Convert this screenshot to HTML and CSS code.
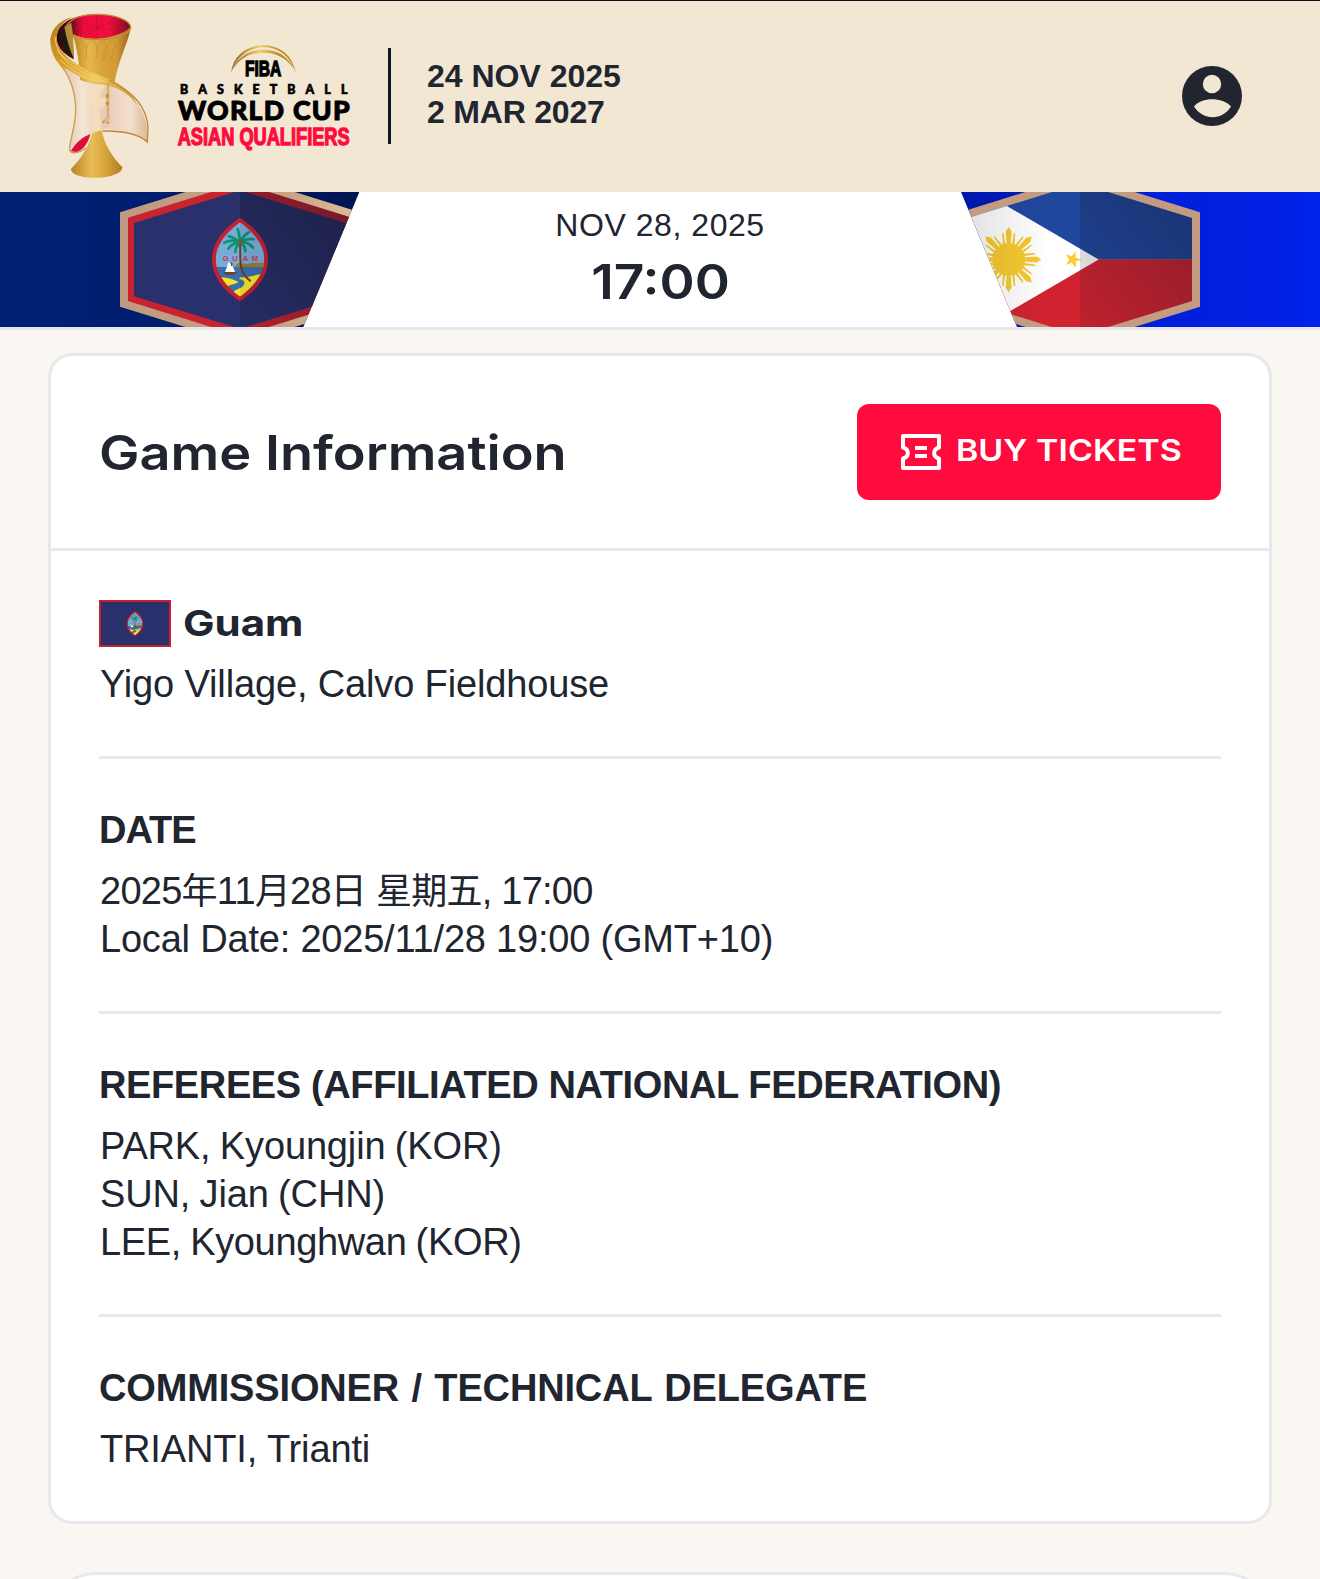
FILE: index.html
```html
<!DOCTYPE html>
<html lang="en">
<head>
<meta charset="utf-8">
<title>Guam v Philippines</title>
<link rel="stylesheet" href="styles.css">
</head>
<body>
<svg class="defs" width="0" height="0" aria-hidden="true">
  <symbol id="guam-seal" viewBox="636 112 168 253">
    <clipPath id="seal-clip"><path d="M720 127C752 150 793 190 793 238C793 286 752 327 720 350C688 327 647 286 647 238C647 190 688 150 720 127Z"/></clipPath>
    <path fill="#c6202e" d="M720 113C757 137 804 180 804 238C804 297 757 340 720 364C683 340 636 297 636 238C636 180 683 137 720 113Z"/>
    <g clip-path="url(#seal-clip)">
      <path fill="#78abd8" d="M640 110H800V262H640Z"/>
      <path fill="#3a6fae" d="M640 261H800V370H640Z"/>
      <path fill="#a17a2c" d="M705 259L716 248L740 252L760 248H800V261H705Z"/>
      <path fill="#f8e426" d="M640 293C668 290 688 293 716 306C704 314 690 312 684 320L660 325ZM720 292C742 294 755 286 800 280V370H690C704 350 690 334 716 326C740 316 738 300 718 297Z"/>
      <path fill="none" stroke="#6b4024" stroke-width="6" d="M720 187C722 216 718 246 725 267C730 285 738 292 752 304"/>
      <g fill="none" stroke="#0d936f" stroke-width="8" stroke-linecap="round">
        <path d="M720 187C718 172 718 160 713 147M720 187C727 174 733 163 747 157M720 187C734 179 746 174 761 178M720 187C735 185 748 190 759 203M720 187C730 193 736 204 736 214M720 187C711 196 706 204 706 216M720 187C704 189 692 194 685 206M720 187C704 180 687 181 673 188M720 187C708 177 700 170 686 169"/>
      </g>
      <circle cx="721" cy="187" r="6" fill="#9e4a2c"/>
      <path fill="#fff" d="M685 246Q700 258 705 276H675Q682 262 685 246Z"/>
      <path fill="#70402a" d="M669 276H712L704 284H678ZM693 247H697V258H693Z"/>
      <text class="seal-name" x="668 697 728 755" y="243">GUAM</text>
    </g>
  </symbol>
</svg>

<header class="site-header">
  <svg class="event-logo" viewBox="0 3 1020 573" role="img" aria-label="FIBA Basketball World Cup Asian Qualifiers">
    <defs>
      <linearGradient id="gold" x1="0" x2="1"><stop offset="0" stop-color="#bd8325"/><stop offset=".28" stop-color="#e7b74c"/><stop offset=".5" stop-color="#d9a338"/><stop offset=".75" stop-color="#d29b36"/><stop offset="1" stop-color="#9b6318"/></linearGradient>
      <linearGradient id="base" x1="0" x2="1"><stop offset="0" stop-color="#b98126"/><stop offset=".4" stop-color="#e9bd55"/><stop offset=".65" stop-color="#d9a53d"/><stop offset="1" stop-color="#b57c26"/></linearGradient>
      <linearGradient id="band" x1="0" x2="1" y2="1"><stop offset="0" stop-color="#b57b1b"/><stop offset=".35" stop-color="#d69d25"/><stop offset=".6" stop-color="#efc659"/><stop offset="1" stop-color="#c98d24"/></linearGradient>
      <linearGradient id="veil" x1="0" x2="1"><stop offset="0" stop-color="#e3bda1"/><stop offset=".25" stop-color="#f4e5d5"/><stop offset=".5" stop-color="#e8cbb5"/><stop offset=".8" stop-color="#f2dfcf"/><stop offset="1" stop-color="#dfb795"/></linearGradient>
      <linearGradient id="bowl" x1="0" x2="1"><stop offset="0" stop-color="#24070c"/><stop offset=".2" stop-color="#6a0920"/><stop offset=".36" stop-color="#ef0c3c"/><stop offset=".7" stop-color="#f20f3f"/><stop offset="1" stop-color="#780a24"/></linearGradient>
      <linearGradient id="arc" x1="0" x2="1"><stop offset="0" stop-color="#8f6418"/><stop offset=".45" stop-color="#f1cd70"/><stop offset=".75" stop-color="#bd8727"/><stop offset="1" stop-color="#c08a2b"/></linearGradient>
    </defs>
    <path fill="url(#base)" d="M190 385H214C220 430 250 477 277 501C277 542 123 544 123 507C150 480 180 440 190 385Z"/>
    <path fill="url(#veil)" d="M92 190C124 240 135 270 136 325C137 380 122 410 118 452C160 405 190 399 222 388C265 386 315 400 352 426C360 365 329 281 237 241Z"/>
    <path fill="#df0b39" d="M122 454C138 426 160 410 181 402C175 428 160 450 140 456Z"/>
    <path fill="none" stroke="#c99c55" stroke-width="4" d="M96 200C128 244 138 285 137 334C135 387 118 423 119 449C121 463 147 461 168 443"/>
    <path fill="#f6dfbd" opacity=".8" d="M153 255H226C219 272 211 278 209 292C236 291 235 323 207 324L214 393H187L191 324C160 323 161 293 190 292C188 275 165 275 153 255Z"/>
    <path fill="url(#bowl)" d="M80 116C79 65 138 43 201 43C258 43 302 62 302 84C299 104 260 118 215 118C180 118 150 112 128 104L131 178C98 160 82 141 80 116Z"/>
    <g fill="none" stroke="#c80a33" stroke-width="2.5" opacity=".65"><path d="M138 64L290 103M145 103L270 55M200 44V118M163 52L205 84L240 47M178 46L205 72L222 45M159 112L205 84L251 115M225 79L255 51M237 80L272 57M250 82L286 63"/></g>
    <path fill="url(#gold)" d="M128 104C175 125 263 119 302 80C300 115 267 175 254 246C228 261 164 246 151 240C148 198 142 145 128 104Z"/>
    <g fill="none" stroke="#b5822f" stroke-width="2.500" opacity=".5"><path d="M141 144C144 124 151 122 155 125C169 136 172 152 168 176M168 150C171 124 182 121 190 123C204 137 206 154 196 184M199 153C202 129 212 124 220 123C233 137 230 157 219 182M229 148C233 127 244 121 251 119C259 133 254 152 243 178M258 142C262 124 272 117 278 113C283 126 274 144 264 162"/></g>
    <path fill="none" stroke="#c58c32" stroke-width="4" d="M110 77C126 51 163 43 201 43C258 43 302 62 302 82C294 120 176 130 128 104"/>
    <path fill="#171b10" d="M103 80L106 89L131 178L106 154L91 110Z"/>
    <path fill="#b28c37" d="M103 80L124 68L129 106L132 178Q112 132 103 80Z"/>
    <path fill="url(#band)" d="M128 50C90 59 60 89 61 125C63 166 84 188 95 202C139 216 163 253 222 253C272 265 302 287 322 315C300 270 261 246 224 232C177 211 128 192 100 159C65 119 78 75 128 50Z"/>
    <path fill="none" stroke="#f1d17a" stroke-width="3" d="M75 111C80 163 109 192 156 215C184 231 205 235 226 246M82 152C105 182 150 198 205 235M90 180C130 212 167 242 220 245"/>
    <path fill="none" stroke="#bc8a3a" stroke-width="4" d="M237 241C300 270 350 314 354 382L352 426C322 398 270 392 218 393"/>
    <g fill="#cf972c" stroke="#c89435" stroke-width="2"><path d="M232 250V352M236 250V363" fill="none"/><circle cx="232" cy="288" r="5"/><circle cx="232" cy="310" r="5"/><circle cx="220" cy="366" r="3"/><circle cx="234" cy="368" r="3"/><path d="M232 350L220 366M228 355L228 371" fill="none"/></g>
    <path fill="url(#arc)" d="M603 218C611 160 657 135 701 136C746 136 788 164 797 218C778 164 744 142 701 142C659 142 623 164 603 218ZM609 207C628 166 660 149 701 149C742 149 774 168 791 206C767 171 736 158 701 158C663 158 633 172 609 207Z"/>
    <text class="logo-fiba" x="645" y="229" textLength="109" lengthAdjust="spacingAndGlyphs">FIBA</text>
    <text class="logo-sport" x="450" y="282" textLength="502">BASKETBALL</text>
    <text class="logo-cup" x="444" y="360" textLength="515">WORLD CUP</text>
    <text class="logo-stage" x="443" y="436" textLength="516" lengthAdjust="spacingAndGlyphs">ASIAN QUALIFIERS</text>
  </svg>
  <div class="event-dates"><span>24 NOV 2025</span><span class="date-end">2 MAR 2027</span></div>
  <svg class="account" viewBox="0 0 60 60" role="img" aria-label="Account">
    <circle cx="30" cy="30" r="30" fill="#20252f"/>
    <circle cx="30" cy="18" r="9.2" fill="#f2e7d3"/>
    <path fill="#f2e7d3" d="M12 40.500C20 30.800 40 30.800 49 40.500C40 55 21 54.500 12 40.500Z"/>
  </svg>
</header>

<section class="scoreboard">
  <svg class="team" viewBox="0 36 1080 405" role="img" aria-label="Guam">
    <defs>
      <linearGradient id="navy" x1="0" x2="1"><stop offset="0" stop-color="#002176"/><stop offset=".45" stop-color="#001e6e"/><stop offset="1" stop-color="#001454"/></linearGradient>
      <linearGradient id="shade-r" x1="0" x2="1" y1="1" y2="0"><stop offset="0" stop-color="#101020" stop-opacity=".1"/><stop offset="1" stop-color="#101020" stop-opacity=".5"/></linearGradient>
      <linearGradient id="tan" x1="0" x2="1"><stop offset="0" stop-color="#c09a80"/><stop offset=".65" stop-color="#c5a081"/><stop offset="1" stop-color="#ddbc9c"/></linearGradient>
      <clipPath id="slant-l"><path d="M0 36H1078L910 441H0Z"/></clipPath>
    </defs>
    <g clip-path="url(#slant-l)">
      <path fill="url(#navy)" d="M0 36H1080V441H0Z"/>
      <path fill="url(#tan)" d="M360 97L720 -15L1080 97V380L720 492L360 380Z"/>
      <path fill="#c9232f" d="M384 113L720 9L1056 113V363L720 468L384 363Z"/>
      <path fill="#29306c" d="M402 129L720 31L1038 129V349L720 446L402 349Z"/>
      <path fill="url(#shade-r)" d="M720 9L1056 113V363L720 468Z"/>
      <use href="#guam-seal" x="636" y="112" width="168" height="253"/>
      <path fill="#101020" opacity=".08" d="M720 113C757 137 804 180 804 238C804 297 757 340 720 364Z"/>
    </g>
  </svg>
  <div class="kickoff"><span class="kickoff-date">NOV 28, 2025</span><span class="kickoff-time">17:00</span></div>
  <svg class="team" viewBox="120 36 1080 405" role="img" aria-label="Philippines">
    <defs>
      <linearGradient id="royal" x1="0" x2="1"><stop offset="0" stop-color="#0017a8"/><stop offset=".5" stop-color="#001fd8"/><stop offset="1" stop-color="#0022ea"/></linearGradient>
      <linearGradient id="dim" x1="0" x2="1" y1="1" y2="0"><stop offset="0" stop-color="#101020" stop-opacity=".08"/><stop offset="1" stop-color="#101020" stop-opacity=".36"/></linearGradient>
      <linearGradient id="soft" x1="0" x2="1"><stop offset="0" stop-color="#202020" stop-opacity=".14"/><stop offset=".75" stop-color="#202020" stop-opacity="0"/></linearGradient>
      <clipPath id="slant-r"><path d="M123 36H1200V441H291Z"/></clipPath>
      <clipPath id="hex-r"><path d="M144 114L480 10L816 114V363L480 467L144 363Z"/></clipPath>
      <g id="ray"><path d="M-6 -45L-9 -84L0 -98L9 -84L6 -45ZM-17 -42L-20 -80L-15 -78L-10 -45ZM17 -42L20 -80L15 -78L10 -45Z"/></g>
    </defs>
    <g clip-path="url(#slant-r)">
      <path fill="url(#royal)" d="M120 36H1200V441H120Z"/>
      <path fill="#c29b80" d="M120 97L480 -15L840 97V380L480 492L120 380Z"/>
      <g clip-path="url(#hex-r)">
        <path fill="#20479e" d="M120 0H840V238.500H120Z"/>
        <path fill="#d0232f" d="M120 238.500H840V480H120Z"/>
        <path fill="#fff" d="M536 238.500L120 -4V481Z"/>
        <g fill="#f6ca2e" transform="translate(266 238.500)"><circle r="49"/>
          <use href="#ray"/><use href="#ray" transform="rotate(45)"/><use href="#ray" transform="rotate(90)"/><use href="#ray" transform="rotate(135)"/><use href="#ray" transform="rotate(180)"/><use href="#ray" transform="rotate(225)"/><use href="#ray" transform="rotate(270)"/><use href="#ray" transform="rotate(315)"/>
        </g>
        <path fill="#fccb32" d="M486 239L467 244L468 263L455 248L437 255L448 239L437 223L455 229L467 214L467 233Z"/>
        <path fill="url(#soft)" d="M120 0H480V480H120Z"/>
        <path fill="url(#dim)" d="M480 0H840V480H480Z"/>
      </g>
    </g>
  </svg>
</section>

<main>
  <article class="card">
    <div class="card-head">
      <h1>Game Information</h1>
      <a class="buy">
        <svg viewBox="0 0 40 36" aria-hidden="true"><path d="M2 2H38V13.500C31.500 15.500 31.500 22.500 38 24.500V34H2V24.500C8.500 22.500 8.500 15.500 2 13.500Z" fill="none" stroke="#fff" stroke-width="4" stroke-linejoin="round"/><path d="M14 14H26M14 22H26" stroke="#fff" stroke-width="4"/></svg>
        <span>BUY TICKETS</span>
      </a>
    </div>
    <div class="card-body">
      <section>
        <div class="venue">
          <svg class="flag" viewBox="0 0 72 47" role="img" aria-label="Flag of Guam"><path fill="#c6202e" d="M0 0H72V47H0Z"/><path fill="#29306c" d="M2 2H70V45H2Z"/><use href="#guam-seal" x="27.500" y="11" width="17" height="25.500"/></svg>
          <h2>Guam</h2>
        </div>
        <p class="t-venue">Yigo Village, Calvo Fieldhouse</p>
      </section>
      <section>
        <h3 class="h-date">DATE</h3>
        <p class="t-when">2025<span class="cjk">年</span>11<span class="cjk">月</span>28<span class="cjk">日</span> <span class="cjk">星期五</span>, 17:00</p>
        <p class="t-local">Local Date: 2025/11/28 19:00 (GMT+10)</p>
      </section>
      <section>
        <h3 class="h-ref">REFEREES (AFFILIATED NATIONAL FEDERATION)</h3>
        <p class="t-ref">PARK, Kyoungjin (KOR)</p>
        <p class="t-ref">SUN, Jian (CHN)</p>
        <p class="t-ref3">LEE, Kyounghwan (KOR)</p>
      </section>
      <section>
        <h3 class="h-com">COMMISSIONER / TECHNICAL DELEGATE</h3>
        <p class="t-venue">TRIANTI, Trianti</p>
      </section>
    </div>
  </article>
  <article class="card card-next"></article>
</main>
</body>
</html>
```
FILE: styles.css
```css
* { box-sizing: border-box; margin: 0; }
body {
  height: 1579px;
  overflow: hidden;
  display: flex;
  flex-direction: column;
  background: #faf6f1;
  color: #20252f;
  font-family: "Liberation Sans", "Noto Sans CJK SC", sans-serif;
}
.defs { display: block; flex: none; height: 0; }
.seal-name { font: bold 23px "Liberation Sans", sans-serif; fill: #c43a52; }

.site-header {
  display: flex;
  align-items: flex-start;
  flex: none;
  height: 192px;
  padding: 0 78px 0 30px;
  border-top: 1px solid #140a12;
  background: #f2e7d3;
}
.event-logo { width: 340px; height: 191px; }
.logo-fiba { font: bold 67px "Liberation Sans", sans-serif; fill: #000; stroke: #000; stroke-width: 4; }
.logo-sport { font: 900 37px Lato, sans-serif; fill: #000; stroke: #000; stroke-width: 2; }
.logo-cup { font: 900 80px Lato, sans-serif; fill: #000; stroke: #000; stroke-width: 3; stroke-linejoin: round; }
.logo-stage { font: bold 73px "Liberation Sans Narrow", "Liberation Sans", sans-serif; fill: #ff0b3d; stroke: #ff0b3d; stroke-width: 4; }
.event-dates {
  display: flex;
  flex-direction: column;
  justify-content: center;
  height: 96px;
  margin: 47px 0 0 18px;
  padding: 0 0 4px 36px;
  border-left: 3px solid #0e1624;
  font-weight: 700;
  font-size: 32px;
  line-height: 36px;
}
.date-end { letter-spacing: -.2px; }
.account { width: 60px; height: 60px; margin: 65px 0 0 auto; }

.scoreboard {
  display: grid;
  grid-template-columns: 360px 1fr 360px;
  flex: none;
  height: 138px;
  border-bottom: 3px solid #e8e8ec;
  background: #fff;
}
.team { display: block; width: 360px; height: 135px; }
.kickoff { display: flex; flex-direction: column; align-items: center; padding-top: 13px; }
.kickoff-date { font-size: 32px; line-height: 40px; letter-spacing: .55px; }
.kickoff-time { font: 600 48px/74px Inter, sans-serif; transform: scaleX(1.11); }

main { display: flex; flex: 1; flex-direction: column; gap: 48px; min-height: 0; overflow: hidden; padding: 23px 48px 0; }
.card { flex: none; border: 3px solid #e8e8ec; border-radius: 24px; background: #fff; }
.card-next { height: 120px; border-radius: 48px; }
.card-head {
  display: flex;
  align-items: center;
  justify-content: space-between;
  height: 195px;
  padding: 0 48px;
  border-bottom: 3px solid #e8e8ec;
}
h1 { padding-top: 2px; font: 600 48px/60px Inter, sans-serif; transform: scaleX(1.127); transform-origin: 0 50%; }
.buy {
  display: flex;
  align-items: center;
  gap: 15px;
  width: 364px;
  height: 96px;
  padding-left: 44px;
  border-radius: 12px;
  background: #ff0b3d;
  color: #fff;
}
.buy svg { width: 40px; height: 36px; }
.buy span { font: 600 30px/40px Inter, sans-serif; padding-bottom: 4px; transform: scaleX(1.131); transform-origin: 0 50%; }

.card-body { padding: 0 48px; }
.card-body section { padding: 47px 0 49px; border-bottom: 3px solid #e8e8ec; }
.card-body section:last-child { border-bottom: 0; }
.venue { display: flex; align-items: center; gap: 12px; height: 49px; margin-bottom: 12px; padding-top: 1px; }
.flag { width: 72px; height: 47px; }
h2 { font: 700 36px/48px Inter, sans-serif; transform: scaleX(1.167); transform-origin: 0 50%; }
h3 { margin-bottom: 12px; font-weight: 700; font-size: 38px; line-height: 48px; }
p { height: 48px; padding: 1px 0 0 1px; font-size: 38px; line-height: 48px; white-space: nowrap; }
.h-date { letter-spacing: -1px; }
.h-ref { letter-spacing: -.38px; }
.h-com { letter-spacing: -.15px; word-spacing: 2px; }
.t-venue { letter-spacing: -.14px; }
.t-local { letter-spacing: -.2px; }
.t-when { letter-spacing: -.75px; }
.t-ref { letter-spacing: -.15px; word-spacing: -1px; }
.t-ref3 { letter-spacing: -.35px; word-spacing: -1px; }
.cjk { font-size: 36px; }
```
